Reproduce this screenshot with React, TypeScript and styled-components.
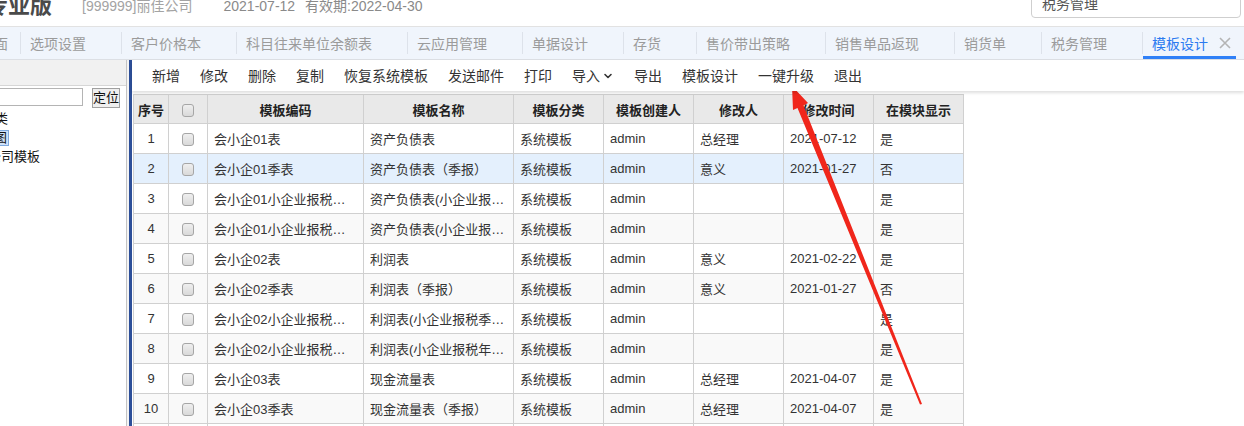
import React from 'react';
import styled, { createGlobalStyle, css } from 'styled-components';
import { ChevronDown } from 'lucide-react';

const GlobalStyle = createGlobalStyle`
  html, body {
    margin: 0;
    padding: 0;
    background: #fff;
  }
  body {
    width: 1244px;
    height: 426px;
    overflow: hidden;
    font-family: "Liberation Sans", Arial, "Noto Sans CJK SC", sans-serif;
  }
  * {
    box-sizing: border-box;
  }
`;

const Page = styled.div`
  position: relative;
  width: 1244px;
  height: 426px;
  display: flex;
  flex-direction: column;
  overflow: hidden;
`;

/* ---------- top header ---------- */

const Header = styled.div`
  height: 27px;
  flex: none;
  border-bottom: 1px solid #e2e2e2;
  overflow: hidden;
`;

const HeaderInner = styled.div`
  display: flex;
  align-items: center;
  height: 40px;
  margin-top: -14px;
`;

const Brand = styled.span`
  font-size: 22px;
  font-weight: bold;
  color: #4a4a4a;
  margin-left: -14px;
  line-height: 26px;
`;

const Company = styled.span`
  font-size: 14px;
  color: #a3a3a3;
  margin-left: 30px;
  line-height: 20px;
`;

const Dates = styled.span`
  font-size: 14px;
  color: #8a8a8a;
  margin-left: 31px;
  line-height: 20px;
  word-spacing: 6px;
`;

const SearchBox = styled.div`
  align-self: flex-start;
  margin: 4px 3px 0 auto;
  width: 210px;
  height: 28px;
  border: 1px solid #cfcfcf;
  border-radius: 4px;
  padding-left: 10px;
  font-size: 14px;
  line-height: 26px;
  color: #555;
`;

/* ---------- tabs ---------- */

const TabBar = styled.div`
  height: 33px;
  flex: none;
  background: #f0f5fc;
  border-bottom: 1px solid #dcdfe4;
  overflow: hidden;
`;

const TabStrip = styled.div`
  display: flex;
  height: 32px;
  margin-left: -30px;
`;

const Tab = styled.div<{ $home?: boolean; $active?: boolean }>`
  position: relative;
  display: flex;
  align-items: center;
  flex: none;
  padding: 0 35px 0 10px;
  font-size: 14px;
  color: #9b9b9b;
  white-space: nowrap;

  &::before {
    content: '';
    position: absolute;
    left: 0;
    top: 5px;
    bottom: 5px;
    width: 1px;
    background: #dde2ea;
  }

  ${(p) =>
    p.$home &&
    css`
      padding-right: 12px;
      &::before {
        display: none;
      }
    `}

  ${(p) =>
    p.$active &&
    css`
      color: #2b7af0;
      padding-right: 4px;
      &::after {
        content: '';
        position: absolute;
        left: 1px;
        right: 0;
        bottom: 0;
        height: 3px;
        background: #2f80f7;
      }
    `}
`;

const TabClose = styled.svg`
  margin-left: 10px;
  width: 14px;
  height: 14px;
`;

/* ---------- body ---------- */

const Body = styled.div`
  flex: 1;
  display: flex;
  min-height: 0;
`;

const LeftPanel = styled.div`
  width: 126px;
  flex: none;
  overflow: hidden;
  display: flex;
  flex-direction: column;
`;

const PanelHead = styled.div`
  height: 26px;
  background: #f1f1f1;
  border-bottom: 1px solid #d6d6d6;
`;

const SearchRow = styled.div`
  display: flex;
  align-items: flex-start;
  margin-top: 2px;
`;

const LocateInput = styled.div`
  width: 91px;
  height: 18px;
  margin-left: -8px;
  border: 1px solid #b4b4b4;
  background: #fff;
`;

const LocateButton = styled.div`
  width: 28px;
  height: 20px;
  margin-left: 9px;
  border: 1px solid #a0a0a0;
  background: #efefef;
  font-size: 13px;
  line-height: 18px;
  text-align: center;
  color: #111;
`;

const Tree = styled.div`
  margin-top: 1px;
  display: flex;
  flex-direction: column;
`;

const TreeItem = styled.div<{ $indent: number; $selected?: boolean }>`
  height: 19px;
  display: flex;
  align-items: center;
  margin-left: ${(p) => p.$indent}px;
  font-size: 13px;
  color: #111;
  white-space: nowrap;

  span {
    padding: 0 1px;
    line-height: 14px;
    ${(p) =>
      p.$selected &&
      css`
        background: #cfe3fb;
        outline: 1px solid #7fa9de;
      `}
  }
`;

const Splitter = styled.div`
  width: 6px;
  flex: none;
  border-left: 1px solid #c4c4c4;
  background: linear-gradient(to right, #f4f4f4 0 2px, #2d4f99 2px 5px);
`;

const Main = styled.div`
  flex: 1;
  display: flex;
  flex-direction: column;
  min-width: 0;
`;

const Toolbar = styled.div`
  height: 31px;
  flex: none;
  display: flex;
  align-items: center;
  padding-left: 10px;
  background: #fff;
  box-shadow: 0 2px 3px rgba(0, 0, 0, 0.13);
  position: relative;
  z-index: 1;
`;

const ToolButton = styled.div`
  display: flex;
  align-items: center;
  padding: 0 10px;
  font-size: 14px;
  color: #333;
  white-space: nowrap;
  line-height: 20px;

  svg {
    margin: 0 0 0 2px;
  }
`;

const TableWrap = styled.div`
  padding: 3px 0 0 1px;
`;

const Grid = styled.table`
  border-collapse: collapse;
  table-layout: fixed;
  width: 831px;
`;

const HeadCell = styled.th`
  height: 29px;
  padding: 0 4px;
  background: #e9e9e9;
  border: 1px solid #d0d0d0;
  font-size: 13px;
  font-weight: bold;
  color: #222;
  text-align: center;
  white-space: nowrap;
`;

const Row = styled.tr<{ $alt?: boolean; $selected?: boolean }>`
  background: ${(p) => (p.$selected ? '#e4f0fd' : p.$alt ? '#f9f9f9' : '#fff')};
`;

const Cell = styled.td<{ $center?: boolean }>`
  height: 30px;
  padding: 0 6px;
  border: 1px solid #d0d0d0;
  font-size: 13px;
  color: #333;
  white-space: nowrap;
  overflow: hidden;
  text-overflow: ellipsis;
  text-align: ${(p) => (p.$center ? 'center' : 'left')};
`;

const Check = styled.span`
  display: inline-block;
  vertical-align: middle;
  width: 12px;
  height: 13px;
  border: 1px solid #a6a6a6;
  border-radius: 3px;
  background: linear-gradient(#efefef, #d9d9d9);
`;

const Overlay = styled.svg`
  position: absolute;
  left: 0;
  top: 0;
  pointer-events: none;
`;

interface TemplateRow {
  code: string;
  name: string;
  creator: string;
  editor: string;
  time: string;
  show: string;
}

const rows: TemplateRow[] = [
  { code: '会小企01表', name: '资产负债表', creator: 'admin', editor: '总经理', time: '2021-07-12', show: '是' },
  { code: '会小企01季表', name: '资产负债表（季报）', creator: 'admin', editor: '意义', time: '2021-01-27', show: '否' },
  { code: '会小企01小企业报税季报', name: '资产负债表(小企业报税季报)', creator: 'admin', editor: '', time: '', show: '是' },
  { code: '会小企01小企业报税年报', name: '资产负债表(小企业报税年报)', creator: 'admin', editor: '', time: '', show: '是' },
  { code: '会小企02表', name: '利润表', creator: 'admin', editor: '意义', time: '2021-02-22', show: '是' },
  { code: '会小企02季表', name: '利润表（季报）', creator: 'admin', editor: '意义', time: '2021-01-27', show: '否' },
  { code: '会小企02小企业报税季报', name: '利润表(小企业报税季报)', creator: 'admin', editor: '', time: '', show: '是' },
  { code: '会小企02小企业报税年报', name: '利润表(小企业报税年报)', creator: 'admin', editor: '', time: '', show: '是' },
  { code: '会小企03表', name: '现金流量表', creator: 'admin', editor: '总经理', time: '2021-04-07', show: '是' },
  { code: '会小企03季表', name: '现金流量表（季报）', creator: 'admin', editor: '总经理', time: '2021-04-07', show: '是' },
  { code: '会小企03小企业报税季报', name: '现金流量表(小企业报税季报)', creator: 'admin', editor: '', time: '', show: '是' },
];

const tabs = ['选项设置', '客户价格本', '科目往来单位余额表', '云应用管理', '单据设计', '存货', '售价带出策略', '销售单品返现', '销货单', '税务管理'];

const tools = ['新增', '修改', '删除', '复制', '恢复系统模板', '发送邮件', '打印'];
const tools2 = ['导出', '模板设计', '一键升级', '退出'];

const App: React.FC = () => {
  return (
    <Page>
      <GlobalStyle />
      <Header>
        <HeaderInner>
          <Brand>专业版</Brand>
          <Company>[999999]丽佳公司</Company>
          <Dates>2021-07-12 有效期:2022-04-30</Dates>
          <SearchBox>税务管理</SearchBox>
        </HeaderInner>
      </Header>

      <TabBar>
        <TabStrip>
          <Tab $home>桌面</Tab>
          {tabs.map((t) => (
            <Tab key={t}>{t}</Tab>
          ))}
          <Tab $active>
            模板设计
            <TabClose viewBox="0 0 14 14">
              <path d="M2 2 L12 12 M12 2 L2 12" stroke="#b4b4b4" strokeWidth="1.6" />
            </TabClose>
          </Tab>
        </TabStrip>
      </TabBar>

      <Body>
        <LeftPanel>
          <PanelHead />
          <SearchRow>
            <LocateInput />
            <LocateButton>定位</LocateButton>
          </SearchRow>
          <Tree>
            <TreeItem $indent={-45}>
              <span>模板分类</span>
            </TreeItem>
            <TreeItem $indent={-33} $selected>
              <span>报表图</span>
            </TreeItem>
            <TreeItem $indent={-39}>
              <span>丽佳公司模板</span>
            </TreeItem>
          </Tree>
        </LeftPanel>

        <Splitter />

        <Main>
          <Toolbar>
            {tools.map((t) => (
              <ToolButton key={t}>{t}</ToolButton>
            ))}
            <ToolButton>
              导入
              <ChevronDown size={12} strokeWidth={3.2} color="#333" />
            </ToolButton>
            {tools2.map((t) => (
              <ToolButton key={t}>{t}</ToolButton>
            ))}
          </Toolbar>

          <TableWrap>
            <Grid>
              <colgroup>
                <col style={{ width: 35 }} />
                <col style={{ width: 39 }} />
                <col style={{ width: 156 }} />
                <col style={{ width: 150 }} />
                <col style={{ width: 90 }} />
                <col style={{ width: 90 }} />
                <col style={{ width: 90 }} />
                <col style={{ width: 90 }} />
                <col style={{ width: 90 }} />
              </colgroup>
              <thead>
                <tr>
                  <HeadCell>序号</HeadCell>
                  <HeadCell>
                    <Check />
                  </HeadCell>
                  <HeadCell>模板编码</HeadCell>
                  <HeadCell>模板名称</HeadCell>
                  <HeadCell>模板分类</HeadCell>
                  <HeadCell>模板创建人</HeadCell>
                  <HeadCell>修改人</HeadCell>
                  <HeadCell>修改时间</HeadCell>
                  <HeadCell>在模块显示</HeadCell>
                </tr>
              </thead>
              <tbody>
                {rows.map((r, i) => (
                  <Row key={i} $alt={i % 2 === 1} $selected={i === 1}>
                    <Cell $center>{i + 1}</Cell>
                    <Cell $center>
                      <Check />
                    </Cell>
                    <Cell>{r.code}</Cell>
                    <Cell>{r.name}</Cell>
                    <Cell>系统模板</Cell>
                    <Cell>{r.creator}</Cell>
                    <Cell>{r.editor}</Cell>
                    <Cell>{r.time}</Cell>
                    <Cell>{r.show}</Cell>
                  </Row>
                ))}
              </tbody>
            </Grid>
          </TableWrap>
        </Main>
      </Body>

      <Overlay width="1244" height="426" viewBox="0 0 1244 426">
        <polygon
          points="792,86 808,103 803.5,105.5 922,404 920,404.5 797.5,108 793,110"
          fill="#f0261b"
        />
      </Overlay>
    </Page>
  );
};

export default App;
